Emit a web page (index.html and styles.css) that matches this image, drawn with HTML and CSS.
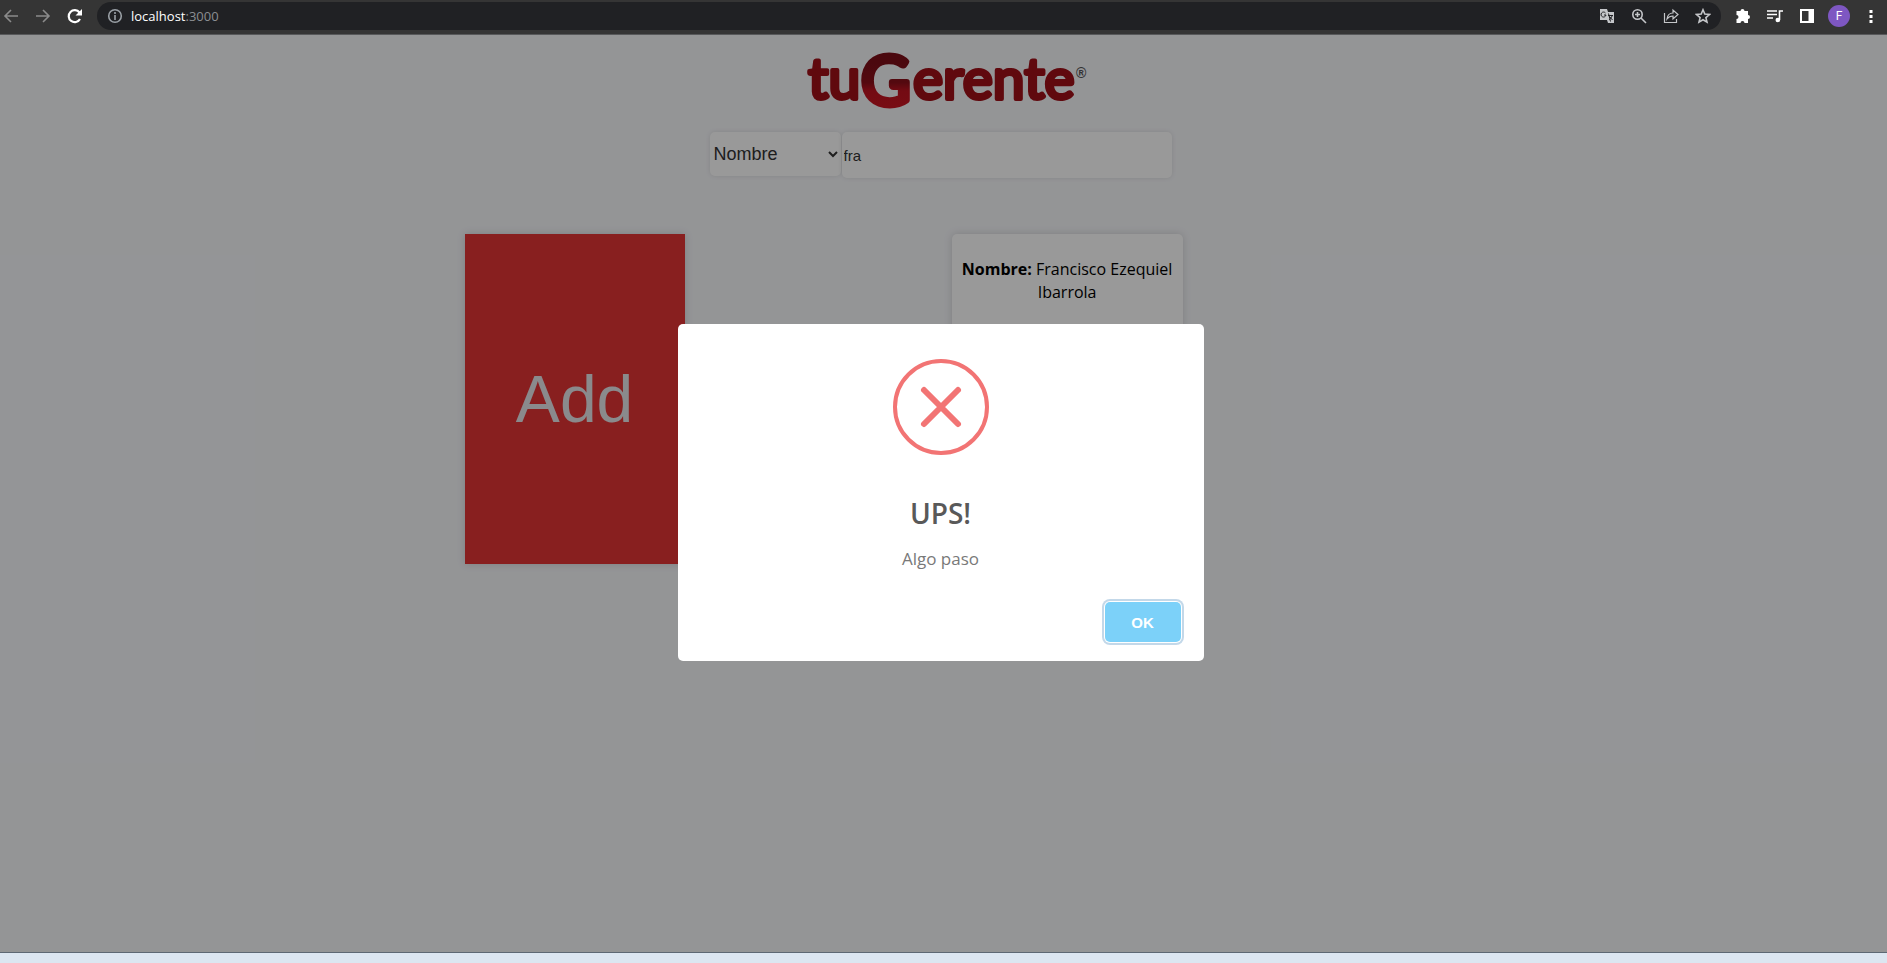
FILE: index.html
```html
<!DOCTYPE html>
<html lang="es">
<head>
<meta charset="utf-8">
<title>tuGerente</title>
<link rel="stylesheet" href="styles.css">
</head>
<body>
<header class="toolbar">
  <nav class="nav" aria-label="Navegador">
    <button class="tool dim" aria-label="Atrás"><svg viewBox="0 0 16 16"><path d="M15 8H2M8 2 2 8l6 6"/></svg></button>
    <button class="tool dim" aria-label="Adelante"><svg viewBox="0 0 16 16"><path d="M1 8h13M8 2l6 6-6 6"/></svg></button>
    <button class="tool" aria-label="Recargar"><svg viewBox="0 0 16 16"><path class="thick" d="M13 11a6 6 0 1 1-.5-6.500"/><path class="solid" d="M15 1v6.500H8.500z"/></svg></button>
  </nav>
  <div class="address">
    <svg class="glyph" viewBox="0 0 16 16"><circle cx="8" cy="8" r="6.300"/><path d="M8 7v5M8 4v2"/></svg>
    <span class="url"><b>localhost</b>:3000</span>
    <div class="address-tools">
      <button class="tool soft" aria-label="Traducir"><svg viewBox="0 0 16 16"><path class="solid" d="M1 1h7l1 3h6v11H9l-1-3H1z"/><path class="cut" d="M6.500 5A2.500 2.500 0 1 0 7 7H5M9.500 5.500l2 8M9 7.500h5M13 8c-.5 2-2 3-3 4M10.500 8.500l3 3.500"/></svg></button>
      <button class="tool soft" aria-label="Zoom"><svg viewBox="0 0 16 16"><circle cx="6.500" cy="6.500" r="4.700"/><path d="m10 10 5 5M6.500 4v5M4 6.500h5"/></svg></button>
      <button class="tool soft" aria-label="Compartir"><svg viewBox="0 0 16 16"><path class="thin" d="M1.500 5v9.500h12V11M4 11c.5-4 3-6 6-6V2l5 4.500-5 4.500V8c-3 0-4.500 1-6 3z"/></svg></button>
      <button class="tool soft" aria-label="Favorito"><svg viewBox="0 0 16 16"><path d="m8 1.800 1.800 4.300 4.700.4-3.600 3.100 1.100 4.600L8 11.800l-4 2.400 1.100-4.600-3.600-3.100 4.700-.4z"/></svg></button>
    </div>
  </div>
  <div class="actions">
    <button class="tool" aria-label="Extensiones"><svg viewBox="0 0 16 16"><path class="solid" d="M2 3h3.500a2 2 0 0 1 4 0H13v4a2 2 0 0 1 0 4v4H9.500a2 2 0 0 0-4 0H1.500v-4a2 2 0 0 0 0-4V3z"/></svg></button>
    <button class="tool" aria-label="Multimedia"><svg viewBox="0 0 16 16"><path d="M0 3h10M0 6.500h10M0 10h6M12.500 12V3H16"/><circle class="solid" cx="10.800" cy="12" r="2.300"/></svg></button>
    <button class="tool" aria-label="Panel lateral"><svg viewBox="0 0 16 16"><path class="solid" fill-rule="evenodd" d="M1 1h14v14H1zM3 3v10h6.500V3z"/></svg></button>
    <button class="avatar" aria-label="Perfil F">F</button>
    <button class="tool" aria-label="Menú"><svg viewBox="0 0 16 16"><path class="solid" d="M6.500 2h3v3h-3zM6.500 7h3v3h-3zM6.500 12h3v3h-3z"/></svg></button>
  </div>
</header>
<div class="viewport">
  <main class="page">
    <svg class="logo" viewBox="0 -15 290 84" role="img" aria-label="tuGerente">
      <defs>
        <linearGradient id="g" x1="0" y1="0" x2="0" y2="1">
          <stop offset=".3" stop-color="#7d0e18"/><stop offset=".55" stop-color="#8c101a"/><stop offset=".65" stop-color="#c01320"/><stop offset="1" stop-color="#d01523"/>
        </linearGradient>
      </defs>
      <g class="word">
        <text class="small" x="7" y="49">tu</text>
        <text class="big" x="60" y="55">G</text>
        <text class="small" x="112" y="49">erente</text>
      </g>
      <text class="mark" x="275" y="28">®</text>
    </svg>
    <form class="search">
      <select class="field" aria-label="Buscar por"><option>Nombre</option></select>
      <input class="query" type="text" value="fra" aria-label="Búsqueda">
    </form>
    <section class="cards">
      <button class="add">Add</button>
      <article class="card"><p><b>Nombre:</b> Francisco Ezequiel Ibarrola</p></article>
    </section>
  </main>
  <div class="overlay">
    <div class="modal" role="dialog" aria-modal="true" aria-labelledby="title">
      <svg class="error" viewBox="0 0 96 96"><circle cx="48" cy="48" r="46"/><path d="m31 31 34 34M65 31 31 65"/></svg>
      <h2 class="title" id="title">UPS!</h2>
      <p class="message">Algo paso</p>
      <div class="footer"><button class="ok">OK</button></div>
    </div>
  </div>
</div>
<div class="taskbar"></div>
</body>
</html>
```
FILE: styles.css
```css
* { box-sizing: border-box; }
body {
  margin: 0;
  height: 100vh;
  display: flex;
  flex-direction: column;
  font-family: "Open Sans", "Noto Sans", sans-serif;
}
button { border: 0; padding: 0; background: none; font-family: inherit; }

.toolbar {
  display: flex;
  align-items: center;
  height: 35px;
  padding: 0 8px 2px 3px;
  background: #353535;
  border-bottom: 1px solid #58595b;
}
.nav, .address-tools, .actions { display: flex; align-items: center; gap: 16px; }
.tool { display: flex; width: 16px; height: 16px; color: #fff; }
.tool.dim { color: #8b8b8b; }
.tool.soft { color: #c4c6c9; }
.tool svg, .glyph { width: 16px; height: 16px; fill: none; stroke: currentColor; stroke-width: 1.6; }
.tool .thick { stroke-width: 2.2; }
.tool .thin { stroke-width: 1.2; }
.tool .solid { fill: currentColor; stroke: none; }
.tool .cut { stroke: #202124; stroke-width: 1; }
.address {
  flex: 1;
  display: flex;
  align-items: center;
  gap: 8px;
  height: 28px;
  margin: 0 14px;
  padding: 0 10px;
  border-radius: 14px;
  background: #202124;
  color: #9aa0a6;
}
.url { flex: 1; font-size: 13px; line-height: 16px; color: #8b8e92; }
.url b { font-weight: 400; color: #fff; }
.avatar {
  width: 22px;
  height: 22px;
  margin: 0 -3px;
  border-radius: 50%;
  background: #7e57c2;
  color: #fff;
  font: 12px/22px Roboto, sans-serif;
}

.viewport { flex: 1; position: relative; background: #f7f8fb; }
.page { display: flex; flex-direction: column; padding-right: 6px; }
.logo { align-self: center; width: 290px; height: 84px; margin-left: 10px; }
.word { font-family: Lato, sans-serif; font-weight: 400; stroke-linejoin: round; fill: #a01018; stroke: #a01018; stroke-width: 4; }
.small { font-size: 57px; }
.big { font-size: 68px; fill: url(#g); stroke: url(#g); stroke-width: 6; }
.mark { font: 700 14px "Liberation Sans", sans-serif; fill: #555; }
.search { display: flex; justify-content: center; gap: 1px; margin-top: 13px; height: 46px; }
.field, .query {
  border: 0;
  border-radius: 5px;
  background-color: #fff;
  color: #333;
  box-shadow: 0 0 5px rgba(0, 0, 0, .1);
  font-family: "Liberation Sans", Arial, sans-serif;
}
.field { width: 131px; height: 44px; font-size: 18px; }
.query { width: 330px; height: 46px; padding: 0 2px; font-size: 15px; }
.cards {
  display: grid;
  grid-template-columns: repeat(2, 26.1vw);
  justify-items: center;
  align-items: start;
  margin-top: 56px;
  padding-left: 17.4vw;
}
.add {
  width: 220px;
  height: 330px;
  background: #e33434;
  color: #e6e6ea;
  box-shadow: 0 0 8px rgba(0, 0, 0, .15);
  font: 66px "Liberation Sans", Arial, sans-serif;
}
.card {
  width: 231px;
  min-height: 300px;
  padding: 24px 4px;
  border-radius: 5px;
  background: #fff;
  box-shadow: 0 0 8px rgba(0, 0, 0, .15);
  text-align: center;
}
.card p { margin: 0; font-size: 16px; line-height: 23px; }

.overlay {
  position: absolute;
  inset: 0;
  display: flex;
  align-items: center;
  justify-content: center;
  padding: 0 6px 2px 0;
  background: rgba(0, 0, 0, .4);
}
.modal {
  display: flex;
  flex-direction: column;
  align-items: center;
  width: 526px;
  border-radius: 5px;
  background: #fff;
}
.error { width: 96px; height: 96px; margin-top: 35px; fill: none; stroke: #f27474; stroke-width: 4; }
.error path { stroke-width: 6; stroke-linecap: round; }
.title { margin: 38px 0 0; font-size: 28px; line-height: 40px; font-weight: 600; color: #595959; }
.message { margin: 14px 0 0; font-size: 17px; line-height: 24px; color: #797979; }
.footer { align-self: stretch; display: flex; justify-content: flex-end; padding: 31px 23px 19px; }
.ok {
  width: 76px;
  height: 40px;
  border-radius: 5px;
  background: #7cd1f9;
  color: #fff;
  box-shadow: 0 0 0 1px #fff, 0 0 0 3px #c3d8e9;
  font: 700 15px "Liberation Sans", Arial, sans-serif;
}
.taskbar { height: 11px; background: #dce6f1; border-top: 1px solid #5d6873; }
```
